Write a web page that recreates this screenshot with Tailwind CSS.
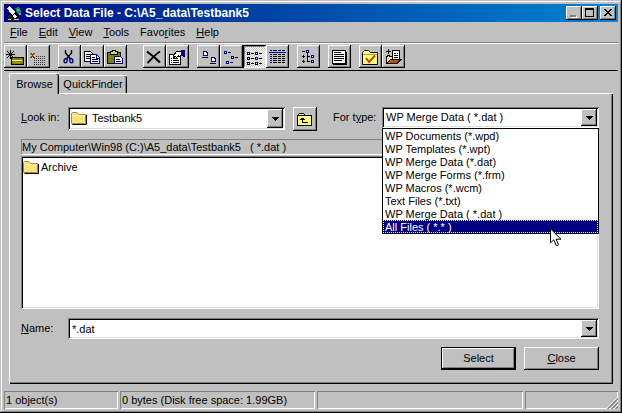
<!DOCTYPE html>
<html lang="en">
<head>
<meta charset="utf-8">
<title>Select Data File</title>
<script src="https://cdn.jsdelivr.net/npm/@tailwindcss/browser@4"></script>
</head>
<body class="bg-[#c0c0c0] font-['Liberation_Sans',Arial,sans-serif] text-[11px] leading-[13px] text-black">
<svg class="hidden" aria-hidden="true">
  <symbol id="folder" viewBox="0 0 16 14">
    <path d="M.5 2.500V12.500H14.500V3.500H7.500L6 1.500H1.500L.5 2.500Z" fill="#f8e47c" stroke="#a88c28"/>
    <path d="M2 4.500h12" stroke="#fff6b8"/>
    <path d="M1.500 13.500H15.500V4" fill="none" stroke="#000"/>
  </symbol>
  <symbol id="arrow" viewBox="0 0 7 4"><path d="M0 0h7v1H0zM1 1h5v1H1zM2 2h3v1H2zM3 3h1v1H3z"/></symbol>
</svg>
<main class="flex min-h-screen flex-col p-1 shadow-[inset_-1px_-1px_#000,inset_1px_1px_#c0c0c0,inset_-2px_-2px_#808080,inset_2px_2px_#fff]">
  <header class="flex h-[18px] items-center bg-linear-to-r from-[#000080] to-[#1084d0] pr-[2px] pl-[2px] text-white">
    <svg class="mr-[3px] h-4 w-4" viewBox="0 0 16 16" shape-rendering="crispEdges" aria-hidden="true">
      <path d="M1 13l3-4 5 1 5 4v2H1z" fill="#222"/>
      <path d="M1 3l3-2 8 9-2 4-3-1z" fill="#000"/>
      <path d="M1 3l3-2 5 6-3 3zM8 9l3 2-2 2-3-2z" fill="#f4f4f4"/>
      <path d="M9 3l4-1 2 4-1 4-3-2z" fill="#188c50"/>
      <path d="M11 4h2v2h-2zM13 8h2v2h-2z" fill="#38b8e0"/>
      <path d="M2 14h3v1H2zM8 14h5v1H8z" fill="#c8c8c8"/>
    </svg>
    <h1 class="flex-1 truncate text-[12px] leading-[16px] font-bold">Select Data File - C:\A5_data\Testbank5</h1>
    <div class="flex">
      <button aria-label="Minimize" class="h-[14px] w-4 bg-[#c0c0c0] shadow-[inset_-1px_-1px_#000,inset_1px_1px_#fff,inset_-2px_-2px_#808080]"><svg class="block h-[14px] w-4" viewBox="0 0 16 14" shape-rendering="crispEdges"><path d="M5 10h6v2H5z" fill="#fff"/><path d="M4 9h6v2H4z" fill="#808080"/></svg></button>
      <button aria-label="Maximize" class="h-[14px] w-4 bg-[#c0c0c0] shadow-[inset_-1px_-1px_#000,inset_1px_1px_#fff,inset_-2px_-2px_#808080]"><svg class="block h-[14px] w-4" viewBox="0 0 16 14" shape-rendering="crispEdges"><path d="M3 2h9v9H3zM4 4v6h7V4z" fill-rule="evenodd"/></svg></button>
      <button aria-label="Close window" class="ml-[2px] h-[14px] w-4 bg-[#c0c0c0] shadow-[inset_-1px_-1px_#000,inset_1px_1px_#fff,inset_-2px_-2px_#808080]"><svg class="block h-[14px] w-4" viewBox="0 0 16 14" shape-rendering="crispEdges"><path d="M4 3h2v1h1v1h2V4h1V3h2v1h-1v1h-1v1H9v1h1v1h1v1h1v1h-2V9H9V8H7v1H6v1H4V9h1V8h1V7h1V6H6V5H5V4H4z"/></svg></button>
    </div>
  </header>
  <nav class="flex h-5 items-center gap-[11px] pl-[6px]">
    <a href="#"><u>F</u>ile</a><a href="#"><u>E</u>dit</a><a href="#"><u>V</u>iew</a><a href="#"><u>T</u>ools</a><a href="#">Favo<u>r</u>ites</a><a href="#"><u>H</u>elp</a>
  </nav>
  <div class="h-[2px] border-t border-b border-t-[#808080] border-b-white"></div>
  <div role="toolbar" class="flex h-[27px] items-center border-b border-black pb-px [&_svg]:block [&_svg]:h-[23px] [&_svg]:w-[23px] [&_button]:shadow-[inset_-1px_-1px_#000,inset_1px_1px_#fff,inset_-2px_-2px_#808080]">
    <div class="flex">
      <button aria-label="Add favorite"><svg viewBox="0 0 23 23" shape-rendering="crispEdges" fill="none" stroke="#000"><path d="M6.500 5v9M2 9.500h9M3 6l7 7M10 6l-7 7"/><path d="M7 12.500h12v7H7z" fill="#808000"/><path d="M8 15.500h10" stroke="#fff68c"/><path d="M9 17.500h8" stroke="#a0a040"/></svg></button>
      <button aria-label="Remove favorite"><svg viewBox="0 0 23 23" shape-rendering="crispEdges" fill="none"><path d="M3 8h2v1h1V8h2v1H7v1H6v1h1v1h1v1H6v-1H5v1H3v-1h1v-1h1v-1H4V9H3z" fill="#804000"/><path d="M9 11.500h10M7 13.500h12M7 15.500h12M7 17.500h12M7 19.500h12" stroke="#333" stroke-dasharray="1 1"/></svg></button>
    </div>
    <div class="ml-2 flex">
      <button aria-label="Cut"><svg viewBox="0 0 23 23" fill="none"><path d="M7.500 5v3l5 6M13.500 5v3l-5 6" stroke="#000" stroke-width="1.400"/><path d="M8.500 13.500c-2 0-2.500 1.500-2.500 3s2.500 2 3 0 0-3-.500-3zM12.500 13.500c2 0 2.500 1.500 2.500 3s-2.500 2-3 0 0-3 .500-3z" stroke="#000080" stroke-width="1.300"/></svg></button>
      <button aria-label="Copy"><svg viewBox="0 0 23 23" shape-rendering="crispEdges"><path d="M3.500 6.500h6l2 2v8h-8z" fill="#fff" stroke="#000"/><path d="M5 9.500h4M5 11.500h4M5 13.500h4" stroke="#000"/><path d="M9.500 9.500h6l3 3v6h-9z" fill="#fff" stroke="#000080"/><path d="M15.500 10v3h3" fill="none" stroke="#000080"/><path d="M11 12.500h3M11 14.500h6M11 16.500h6" stroke="#000"/></svg></button>
      <button aria-label="Paste"><svg viewBox="0 0 23 23" shape-rendering="crispEdges"><path d="M3.500 7.500h13v11h-13z" fill="#808000" stroke="#000"/><path d="M6.500 9.500v-3h2v-1h3v1h2v3z" fill="#d8d070" stroke="#000"/><path d="M10.500 11.500h6l2 2v5h-8z" fill="#fff" stroke="#000080"/><path d="M12 14.500h4M12 16.500h5" stroke="#000"/></svg></button>
    </div>
    <div class="ml-4 flex">
      <button aria-label="Delete"><svg viewBox="0 0 23 23"><path d="M4 6.500c4 3 8 6 13 11M17 6.500c-5 3-8 7-12.500 11.500" fill="none" stroke="#000" stroke-width="2"/></svg></button>
      <button aria-label="Properties"><svg viewBox="0 0 23 23" shape-rendering="crispEdges"><path d="M3.500 9.500h11v10h-11z" fill="#fff" stroke="#000"/><path d="M5 13.500h1M7 13.500h5M5 15.500h1M7 15.500h6M5 17.500h1M7 17.500h6" stroke="#000"/><path d="M7.500 10.500l3-4h5v4l-3 1v-1l-2 2-1-1-2 1z" fill="#fff" stroke="#000"/><path d="M15 5h4v7h-2v-1h-2z" fill="#000080"/></svg></button>
    </div>
    <div class="ml-2 flex">
      <button aria-label="Large icons"><svg viewBox="0 0 23 23" shape-rendering="crispEdges"><path d="M6.500 6.500h3v1h1v3h-4zM14.500 12.500h3v1h1v3h-4z" fill="#fff" stroke="#000080"/><path d="M5 12.500h6M13 18.500h6" stroke="#000"/></svg></button>
      <button aria-label="Small icons"><svg viewBox="0 0 23 23" shape-rendering="crispEdges"><path d="M4.500 6.500h2v2h-2zM11.500 11.500h2v2h-2zM6.500 16.500h2v2h-2z" fill="#fff" stroke="#000080"/><path d="M8 7.500h3M15 12.500h3M10 17.500h3" stroke="#000"/></svg></button>
      <button aria-label="List" aria-pressed="true" class="bg-[repeating-conic-gradient(#fff_0_25%,#c8c8c8_0_50%)] bg-[length:2px_2px] shadow-[inset_1px_1px_#000,inset_-1px_-1px_#fff,inset_2px_2px_#808080]!"><svg viewBox="0 0 23 23" shape-rendering="crispEdges"><path d="M4.500 7.500h2v2h-2zM12.500 7.500h2v2h-2zM4.500 12.500h2v2h-2zM12.500 12.500h2v2h-2zM4.500 17.500h2v2h-2zM12.500 17.500h2v2h-2z" fill="#fff" stroke="#000080"/><path d="M8 8.500h3M16 8.500h3M8 13.500h3M16 13.500h3M8 18.500h3M16 18.500h3" stroke="#000"/></svg></button>
      <button aria-label="Details"><svg viewBox="0 0 23 23" shape-rendering="crispEdges"><path d="M4 5.500h2M7 5.500h4M12 5.500h3M16 5.500h3M3 7.500h17" stroke="#000080"/><path d="M4 9.500h2M4 11.500h2M4 13.500h2M4 15.500h2M4 17.500h2" stroke="#000080"/><path d="M7 9.500h4M12 9.500h3M16 9.500h3M7 11.500h4M12 11.500h3M16 11.500h3M7 13.500h4M12 13.500h3M16 13.500h3M7 15.500h4M12 15.500h3M16 15.500h3M7 17.500h4M12 17.500h3M16 17.500h3" stroke="#000"/></svg></button>
    </div>
    <div class="ml-2 flex">
      <button aria-label="Tree view"><svg viewBox="0 0 23 23" shape-rendering="crispEdges" fill="none"><path d="M5 6.500h3M5 11.500h3M6.500 10v3M5 16.500h3M6.500 15v3M10.500 8v9M10 11.500h3M10 16.500h3" stroke="#000"/><path d="M9.500 5.500h2v2h-2zM14.500 10.500h2v2h-2zM14.500 15.500h2v2h-2z" fill="#fff" stroke="#000080"/></svg></button>
    </div>
    <div class="ml-2 flex">
      <button aria-label="Viewer"><svg viewBox="0 0 23 23" shape-rendering="crispEdges"><path d="M4.500 5.500h13v13h-13z" fill="#fff" stroke="#000"/><path d="M5 19.500h14M18.500 7v13" stroke="#000"/><path d="M6 7.500h7M6 9.500h10M6 11.500h10M6 13.500h10M6 15.500h8" stroke="#000"/></svg></button>
    </div>
    <div class="ml-2 flex">
      <button aria-label="Go to favorites"><svg viewBox="0 0 23 23"><path d="M3.500 19.500v-12l2-2h4l2 2h7v12z" fill="#ffff80" stroke="#000"/><path d="M4 9.500h14" stroke="#b0a030"/><path d="M7 13l3 4 6-6.500" fill="none" stroke="#d04010" stroke-width="2"/></svg></button>
      <button aria-label="Add to favorites"><svg viewBox="0 0 23 23" shape-rendering="crispEdges"><path d="M6.500 4v5M4 6.500h5" stroke="#000"/><path d="M4.500 18.500v-7l2-1 2 1h3v7z" fill="#ffef70" stroke="#000"/><path d="M10.500 5.500h7v9h-7z" fill="#fff" stroke="#000"/><path d="M12 8.500h2M15 8.500h1M12 10.500h4M12 12.500h4" stroke="#000"/><path d="M4.500 18.500l4-4h10.500l-4 4z" fill="#b85010" stroke="#000"/></svg></button>
    </div>
  </div>
  <div role="tablist" class="flex h-[22px] items-end pl-[5px]">
    <button role="tab" aria-selected="true" class="relative z-10 -mb-px h-[21px] w-[50px] rounded-t-[2px] border-t border-l border-white bg-[#c0c0c0] pt-px shadow-[inset_-1px_0_#000,inset_-2px_0_#808080]">Browse</button>
    <button role="tab" class="h-[18px] w-[68px] rounded-t-[2px] border-t border-white pb-px shadow-[inset_-1px_0_#000,inset_-2px_0_#808080]">QuickFinder</button>
  </div>
  <section class="mr-[5px] ml-[5px] flex flex-1 flex-col border-t border-l border-white pt-[13px] pr-[14px] pb-[14px] pl-[11px] shadow-[inset_-1px_-1px_#000,inset_-2px_-2px_#808080]">
    <div class="flex items-start">
      <label for="look" class="w-[47px] pt-1"><u>L</u>ook in:</label>
      <div class="relative flex-1 bg-white shadow-[inset_1px_1px_#808080,inset_-1px_-1px_#fff,inset_2px_2px_#000,inset_-2px_-2px_#dfdfdf]">
        <select id="look" class="block h-[23px] w-full appearance-none bg-transparent pl-6 outline-none"><option>Testbank5</option></select>
        <svg class="pointer-events-none absolute top-1 left-[3px] h-[14px] w-4"><use href="#folder"/></svg>
        <span class="pointer-events-none absolute inset-y-[2px] right-[2px] flex w-4 items-center justify-center bg-[#c0c0c0] shadow-[inset_-1px_-1px_#000,inset_1px_1px_#fff,inset_-2px_-2px_#808080]"><svg class="h-1 w-[7px]" shape-rendering="crispEdges"><use href="#arrow"/></svg></span>
      </div>
      <button aria-label="Up one level" class="ml-2 h-6 w-6 shadow-[inset_-1px_-1px_#000,inset_1px_1px_#fff,inset_-2px_-2px_#808080]"><svg class="block h-6 w-6" viewBox="0 0 24 24" shape-rendering="crispEdges"><path d="M4.500 18.500v-10l2-2h4l2 2h6v10z" fill="#ffff80" stroke="#000"/><path d="M5 8.500h8" stroke="#000"/><path d="M9.500 11v4.500h5M7 12.500h5M8 11.500h3" fill="none" stroke="#000"/></svg></button>
      <label for="type" class="ml-4 w-[49px] pt-1 whitespace-nowrap">For t<u>y</u>pe:</label>
      <div class="relative flex-1 bg-white shadow-[inset_1px_1px_#808080,inset_-1px_-1px_#fff,inset_2px_2px_#000,inset_-2px_-2px_#dfdfdf]">
        <select id="type" class="block h-[21px] w-full appearance-none bg-transparent pl-1 outline-none"><option>WP Merge Data ( *.dat )</option></select>
        <span class="pointer-events-none absolute inset-y-[2px] right-[2px] flex w-4 items-center justify-center bg-[#c0c0c0] shadow-[inset_-1px_-1px_#000,inset_1px_1px_#fff,inset_-2px_-2px_#808080]"><svg class="h-1 w-[7px]" shape-rendering="crispEdges"><use href="#arrow"/></svg></span>
        <ul role="listbox" aria-label="File types" class="absolute inset-x-0 top-full z-20 border border-black bg-white [&>li]:h-[13px] [&>li]:pl-[2px] [&>li]:leading-[15px]">
          <li role="option">WP Documents (*.wpd)</li>
          <li role="option">WP Templates (*.wpt)</li>
          <li role="option">WP Merge Data (*.dat)</li>
          <li role="option">WP Merge Forms (*.frm)</li>
          <li role="option">WP Macros (*.wcm)</li>
          <li role="option">Text Files (*.txt)</li>
          <li role="option">WP Merge Data ( *.dat )</li>
          <li role="option" aria-selected="true" class="relative bg-[#000080] text-white outline-1 -outline-offset-1 outline-dotted outline-[#ffff80]">All Files ( *.* )
            <svg class="absolute top-2 right-9 h-[19px] w-3" viewBox="0 0 12 19" aria-hidden="true"><path d="M.5 .8v14l3.300-3 2.500 6 2.300-1-2.500-5.600H11z" fill="#fff" stroke="#000"/></svg>
          </li>
        </ul>
      </div>
    </div>
    <p class="mt-2 h-4 border border-t-[#808080] border-r-white border-b-white border-l-[#808080] leading-[15px] whitespace-pre">My Computer\Win98 (C:)\A5_data\Testbank5   ( *.dat )</p>
    <ul aria-label="Files" class="mt-px min-h-[120px] flex-1 bg-white pt-[3px] pl-[2px] shadow-[inset_1px_1px_#808080,inset_-1px_-1px_#fff,inset_2px_2px_#000,inset_-2px_-2px_#dfdfdf]">
      <li class="flex items-center gap-[2px]"><svg class="h-[14px] w-4"><use href="#folder"/></svg><span class="pt-[2px]">Archive</span></li>
    </ul>
    <div class="mt-[9px] flex items-center">
      <label for="name" class="w-[47px]"><u>N</u>ame:</label>
      <div class="relative flex-1 bg-white shadow-[inset_1px_1px_#808080,inset_-1px_-1px_#fff,inset_2px_2px_#000,inset_-2px_-2px_#dfdfdf]">
        <input id="name" value="*.dat" class="block h-[21px] w-full bg-transparent pr-5 pl-1 outline-none">
        <button aria-label="Recent names" class="absolute inset-y-[2px] right-[2px] flex w-4 items-center justify-center bg-[#c0c0c0] shadow-[inset_-1px_-1px_#000,inset_1px_1px_#fff,inset_-2px_-2px_#808080]"><svg class="h-1 w-[7px]" shape-rendering="crispEdges"><use href="#arrow"/></svg></button>
      </div>
    </div>
    <div class="mt-2 flex justify-end gap-2">
      <button class="h-[23px] w-[75px] border border-black pb-px shadow-[inset_-1px_-1px_#000,inset_1px_1px_#fff,inset_-2px_-2px_#808080]">Select</button>
      <button class="h-[23px] w-[75px] pb-px shadow-[inset_-1px_-1px_#000,inset_1px_1px_#fff,inset_-2px_-2px_#808080]"><u>C</u>lose</button>
    </div>
  </section>
  <footer class="mt-[7px] flex h-[18px] gap-[2px] leading-[19px] [&>div]:shadow-[inset_1px_1px_#808080,inset_-1px_-1px_#fff]">
    <div class="w-[114px] pl-[2px]">1 object(s)</div>
    <div class="w-[195px] pl-[2px] whitespace-nowrap">0 bytes (Disk free space: 1.99GB)</div>
    <div class="flex-1"></div>
    <div class="flex w-[93px] items-end justify-end"><svg class="h-3 w-3" viewBox="0 0 12 12" aria-hidden="true"><path d="M0 12L12 0M4 12l8-8M8 12l4-4" stroke="#fff"/><path d="M1.500 12L12 1.500M5.500 12L12 5.500M9.500 12L12 9.500" stroke="#808080" stroke-width="1.500"/></svg></div>
  </footer>
</main>
</body>
</html>
